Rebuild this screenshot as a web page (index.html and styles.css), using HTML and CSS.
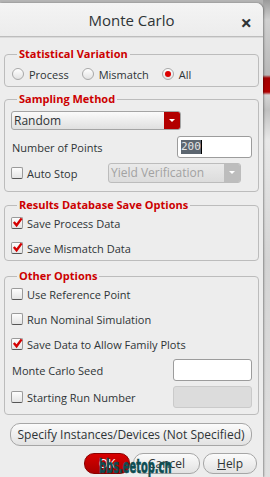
FILE: index.html
```html
<!DOCTYPE html>
<html lang="en">
  <head>
    <meta charset="UTF-8" />
    <meta name="viewport" content="width=device-width, initial-scale=1.0" />
    <title>Monte Carlo</title>
    <link rel="stylesheet" href="styles.css">
  </head>
  <body>
    <div class="dialog">
      <div class="titlebar">
        <span class="title">Monte Carlo</span>
        <span class="close">&times;</span>
      </div>

      <div class="content">
        <fieldset class="group group-stat">
          <legend>Statistical Variation</legend>
          <div class="row radios">
            <label><span class="radio"></span>Process</label>
            <label><span class="radio"></span>Mismatch</label>
            <label><span class="radio on"></span>All</label>
          </div>
        </fieldset>

        <fieldset class="group group-sampling">
          <legend>Sampling Method</legend>
          <div class="select">
            <span class="select-text">Random</span>
            <span class="select-arrow"></span>
          </div>
          <div class="row field-row points">
            <span class="label">Number of Points</span>
            <span class="input"><span class="sel">200</span><span class="caret"></span></span>
          </div>
          <div class="row field-row auto">
            <label><span class="check"></span>Auto Stop</label>
            <div class="select disabled">
              <span class="select-text">Yield Verification</span>
              <span class="select-arrow"></span>
            </div>
          </div>
        </fieldset>

        <fieldset class="group group-results">
          <legend>Results Database Save Options</legend>
          <div class="row"><label><span class="check on"><svg viewBox="0 0 12 12"><path d="M2 5.5 L5 9 L10.5 1.5" /></svg></span>Save Process Data</label></div>
          <div class="row"><label><span class="check on"><svg viewBox="0 0 12 12"><path d="M2 5.5 L5 9 L10.5 1.5" /></svg></span>Save Mismatch Data</label></div>
        </fieldset>

        <fieldset class="group group-other">
          <legend>Other Options</legend>
          <div class="row"><label><span class="check"></span>Use Reference Point</label></div>
          <div class="row"><label><span class="check"></span>Run Nominal Simulation</label></div>
          <div class="row"><label><span class="check on"><svg viewBox="0 0 12 12"><path d="M2 5.5 L5 9 L10.5 1.5" /></svg></span>Save Data to Allow Family Plots</label></div>
          <div class="row field-row seed">
            <span class="label">Monte Carlo Seed</span>
            <span class="input"></span>
          </div>
          <div class="row field-row start">
            <label><span class="check"></span>Starting Run Number</label>
            <span class="input disabled"></span>
          </div>
        </fieldset>

        <button class="btn wide">Specify Instances/Devices (Not Specified)</button>

        <div class="actions">
          <button class="btn ok">OK</button>
          <button class="btn">Cancel</button>
          <button class="btn"><u>H</u>elp</button>
        </div>
      </div>

      <!-- forum watermark over the buttons -->
      <span class="watermark">bbs.eetop.cn</span>
    </div>
    <div class="backdrop"></div>
  </body>
</html>
```

FILE: styles.css
```css
body {
  margin: 0;
  width: 270px;
  height: 477px;
  overflow: hidden;
  display: flex;
  background: #b4b4b4;
  font-family: "Open Sans", "Noto Sans", sans-serif;
  font-size: 11px;
  color: #2e3436;
}

.backdrop {
  flex: 1;
  background: linear-gradient(#9a9a9a 0, #d0d0d0 20px, #b8b8b8 75px, #a30000 78px, #b00000 92px,
      #d6d6d6 95px, #c0c0c0 110px, #e8e8e8 140px, #d4d4d4 260px, #e0e0e0 477px);
}

.dialog {
  position: relative;
  width: 263px;
  margin-top: 3px;
  background: #ededed;
  border-radius: 0 7px 0 0;
  box-shadow: 1px 0 2px rgba(0, 0, 0, 0.35);
}

.titlebar {
  height: 33px;
  display: flex;
  align-items: center;
  justify-content: center;
  position: relative;
  background: linear-gradient(#f4f4f4, #ececec);
  border-bottom: 1px solid #bdbdbd;
  box-shadow: 0 1px 0 #dadada;
  border-radius: 0 7px 0 0;
}

.title {
  font-size: 15px;
  color: #2e3436;
}

.close {
  position: absolute;
  right: 11px;
  top: 6px;
  font-size: 20px;
  font-weight: bold;
  color: #2e3436;
}

.content {
  padding: 9px 4px 0 4px;
}

.group {
  margin: 0;
  padding: 0 5px;
  border: 1px solid #bcbcbc;
  border-radius: 4px;
}

.group legend {
  color: #cc0000;
  font-weight: bold;
  font-size: 11px;
  padding: 0 2px;
  margin-left: 7px;
  line-height: 16px;
}

.group-stat {
  padding-top: 2px;
  padding-bottom: 2px;
}

.group-sampling {
  margin-top: 4px;
  padding-top: 4px;
  padding-bottom: 8px;
}

.group-results {
  margin-top: 5px;
  padding-bottom: 2px;
}

.group-other {
  margin-top: 7px;
  padding-bottom: 6px;
}

.row {
  height: 20px;
  display: flex;
  align-items: center;
}

.group-results .row + .row,
.group-other .row + .row {
  margin-top: 5px;
}

label {
  display: flex;
  align-items: center;
  white-space: nowrap;
}

.radios label {
  margin-right: 11px;
}

.radio {
  width: 10px;
  height: 10px;
  border-radius: 50%;
  border: 1px solid #a8a8a8;
  background: linear-gradient(#ffffff, #e2e2e2);
  margin: 0 5px 0 2px;
  position: relative;
}

.radio.on::after {
  content: "";
  position: absolute;
  left: 2px;
  top: 2px;
  width: 6px;
  height: 6px;
  border-radius: 50%;
  background: #dd0000;
}

.check {
  width: 10px;
  height: 10px;
  border: 1px solid #9a9a9a;
  border-bottom-color: #555;
  border-radius: 2px;
  background: linear-gradient(#fdfdfd, #e4e4e4);
  margin: 0 4px 0 1px;
  position: relative;
}

.check svg {
  position: absolute;
  left: 0;
  top: -1px;
  width: 11px;
  height: 11px;
}

.check path {
  fill: none;
  stroke: #d40000;
  stroke-width: 2.6;
}

.select {
  height: 19px;
  width: 170px;
  display: flex;
  align-items: stretch;
  border: 1px solid #a4a4a4;
  border-radius: 3px;
  background: linear-gradient(#fafafa, #e0e0e0);
  box-sizing: border-box;
  margin-left: 1px;
  overflow: hidden;
}

.select-text {
  flex: 1;
  padding-left: 2px;
  line-height: 17px;
  font-size: 12px;
}

.select-arrow {
  width: 16px;
  background: #b30000;
  position: relative;
}

.select-arrow::after {
  content: "";
  position: absolute;
  left: 5px;
  top: 7px;
  border-left: 3px solid transparent;
  border-right: 3px solid transparent;
  border-top: 3px solid #ffffff;
}

.select.disabled {
  width: 133px;
  height: 20px;
  margin-left: auto;
  margin-right: 12px;
  color: #a2a2a2;
  background: linear-gradient(#eaeaea, #dcdcdc);
  border-color: #bcbcbc;
}

.select.disabled .select-text {
  line-height: 18px;
}

.select.disabled .select-arrow {
  background: #bdbdbd;
}

.field-row {
  justify-content: space-between;
}

.field-row .label {
  padding-left: 2px;
}

.points {
  height: 22px;
  margin-top: 6px;
}

.auto {
  margin-top: 5px;
}

.input {
  width: 75px;
  height: 22px;
  box-sizing: border-box;
  border: 1px solid #9c9c9c;
  border-radius: 3px;
  background: #ffffff;
  margin-right: 1px;
  display: flex;
  align-items: center;
  padding-left: 3px;
}

.seed .input,
.start .input {
  width: 79px;
}

.input.disabled {
  background: #dcdcdc;
  border-color: #cacaca;
}

.sel {
  font-family: "DejaVu Sans Mono", monospace;
  font-size: 11px;
  background: #5c6670;
  color: #e4e4e4;
  line-height: 14px;
}

.caret {
  width: 1px;
  height: 14px;
  background: #000000;
}

.group-other .seed {
  height: 22px;
  margin-top: 4px;
}

.group-other .start {
  height: 22px;
  margin-top: 7px;
}

.btn {
  font-family: "Open Sans", "Noto Sans", sans-serif;
  font-size: 12px;
  color: #2e3436;
  border: 1px solid #a6a6a6;
  border-radius: 10px;
  background: linear-gradient(#fbfbfb, #e2e2e2);
  height: 21px;
  padding: 0;
}

.wide {
  display: block;
  width: 242px;
  height: 23px;
  margin: 8px 0 0 6px;
}

.actions {
  display: flex;
  justify-content: flex-end;
  gap: 3px;
  margin-top: 7px;
  padding-right: 2px;
}

.actions .btn {
  width: 67px;
}

.actions .btn:last-child {
  width: 54px;
}

.actions .ok {
  width: 46px;
  background: linear-gradient(#d80000, #a80000);
  border-color: #8a0000;
  color: #ffffff;
}

.watermark {
  position: absolute;
  left: 99px;
  top: 452px;
  font-family: "DejaVu Sans Condensed", "DejaVu Sans", sans-serif;
  font-weight: bold;
  font-size: 20px;
  line-height: 23px;
  color: #0d4d52;
  -webkit-text-stroke: 0.6px #0d4d52;
  transform: scaleX(0.55);
  transform-origin: left top;
  white-space: nowrap;
}
```
